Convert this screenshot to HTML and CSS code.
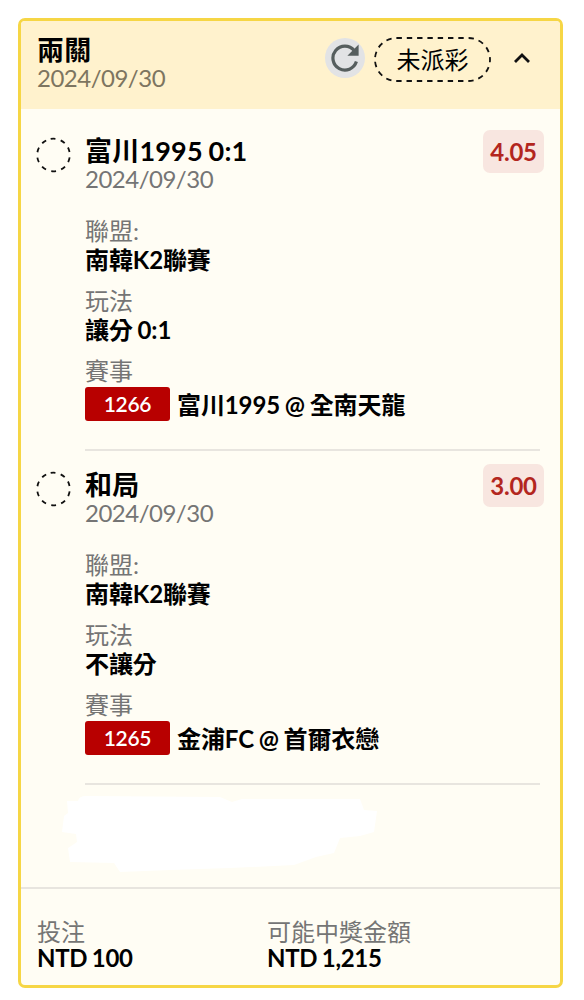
FILE: index.html
```html
<!DOCTYPE html>
<html lang="zh-Hant">
<head>
    <meta charset="UTF-8">
    <meta name="viewport" content="width=device-width, initial-scale=1.0">
    <title>兩關</title>
    <link rel="stylesheet" href="styles.css">
</head>
<body>
    <div class="ticket">
        <div class="ticket-header">
            <div class="heading">
                <div class="title">兩關</div>
                <div class="date">2024/09/30</div>
            </div>
            <button class="refresh">
                <svg width="30" height="30" viewBox="0 0 30 30">
                    <path d="M24.2 7.4 A12 12 0 1 0 26.4 18.6" fill="none" stroke="#565e5e" stroke-width="3.2"/>
                    <path d="M28.6 1.4 V12.8 H17.4 Z" fill="#565e5e"/>
                </svg>
            </button>
            <div class="status">
                <svg class="status-line" width="118" height="46" viewBox="0 0 118 46">
                    <rect x="2" y="1" width="115" height="43" rx="21.5" fill="none" stroke="#111" stroke-width="1.8" stroke-dasharray="5.4 4.9"/>
                </svg>
                <span>未派彩</span>
            </div>
            <svg class="arrow" width="18" height="12" viewBox="0 0 18 12">
                <path d="M2 10 L9 3 L16 10" fill="none" stroke="#111" stroke-width="2.8"/>
            </svg>
        </div>

        <div class="legs">
            <div class="leg">
                <svg class="pending" width="36" height="36" viewBox="0 0 36 36">
                    <circle cx="17.5" cy="18" r="16.3" transform="rotate(-100 17.5 18)" fill="none" stroke="#111" stroke-width="1.8" stroke-dasharray="4.8 5.44"/>
                </svg>
                <div class="leg-body">
                    <div class="title">富川1995 0:1</div>
                    <div class="date">2024/09/30</div>
                    <div class="fields">
                        <div class="field">
                            <div class="label">聯盟:</div>
                            <div class="value">南韓K2聯賽</div>
                        </div>
                        <div class="field">
                            <div class="label">玩法</div>
                            <div class="value">讓分 0:1</div>
                        </div>
                        <div class="field">
                            <div class="label">賽事</div>
                            <div class="match"><span class="code">1266</span><span class="value">富川1995 @ 全南天龍</span></div>
                        </div>
                    </div>
                </div>
                <div class="odds">4.05</div>
            </div>

            <div class="leg">
                <svg class="pending" width="36" height="36" viewBox="0 0 36 36">
                    <circle cx="17.5" cy="18" r="16.3" transform="rotate(-100 17.5 18)" fill="none" stroke="#111" stroke-width="1.8" stroke-dasharray="4.8 5.44"/>
                </svg>
                <div class="leg-body">
                    <div class="title">和局</div>
                    <div class="date">2024/09/30</div>
                    <div class="fields">
                        <div class="field">
                            <div class="label">聯盟:</div>
                            <div class="value">南韓K2聯賽</div>
                        </div>
                        <div class="field">
                            <div class="label">玩法</div>
                            <div class="value">不讓分</div>
                        </div>
                        <div class="field">
                            <div class="label">賽事</div>
                            <div class="match"><span class="code">1265</span><span class="value">金浦FC @ 首爾衣戀</span></div>
                        </div>
                    </div>
                </div>
                <div class="odds">3.00</div>
            </div>
        </div>

        <div class="note">
            <svg width="318" height="78" viewBox="0 0 318 78">
                <path d="M8 5 Q9 0 16 0 L150 1 L162 6 L172 3 L290 3 L294 14 L307 15 L304 36 L290 40 L270 42 L264 57 L246 61 L224 69 L160 72 L100 74 L50 76 L44 67 L0 66 L-2 52 L7 46 L6 38 L-8 36 L-6 20 L-2 17 L-3 5 Z" transform="translate(8 0)" fill="#fff"/>
            </svg>
        </div>

        <div class="ticket-footer">
            <div class="amount">
                <div class="label">投注</div>
                <div class="value">NTD 100</div>
            </div>
            <div class="amount">
                <div class="label">可能中獎金額</div>
                <div class="value">NTD 1,215</div>
            </div>
        </div>
    </div>
</body>
</html>
```
FILE: styles.css
```css
* { box-sizing: border-box; }
body {
    margin: 0;
    padding: 18px 21px 12px 18px;
    background-color: #fff;
    color: #000;
    font-family: Lato, "Noto Sans CJK TC", sans-serif;
    font-size: 24px;
}
.ticket {
    display: flex;
    flex-direction: column;
    height: 970px;
    border: 3px solid #f6d645;
    border-radius: 7px;
    background-color: #fffdf4;
    overflow: hidden;
}
.ticket-header {
    display: flex;
    align-items: flex-start;
    height: 88px;
    padding: 13px 29px 0 16px;
    background-color: #fff2cd;
}
.heading { flex: 1; }
.title {
    font-size: 27px;
    font-weight: 700;
    line-height: 32px;
    letter-spacing: 0.2px;
    word-spacing: -1px;
    white-space: nowrap;
}
.date { line-height: 26px; color: #757575; letter-spacing: -0.5px; }
.ticket-header .date { margin-top: -1px; color: #7d7560; }
.refresh {
    display: flex;
    align-items: center;
    justify-content: center;
    width: 40px;
    height: 40px;
    margin-top: 4px;
    padding: 0;
    border: none;
    border-radius: 50%;
    background-color: #e2e3e5;
}
.status {
    position: relative;
    width: 118px;
    height: 46px;
    margin: 3px 22px 0 8px;
    padding-left: 1px;
    text-align: center;
    line-height: 46px;
}
.status-line { position: absolute; left: 0; top: 0; }
.arrow { margin-top: 18px; }

.legs { padding: 8px 20px 0 15px; }
.leg {
    position: relative;
    display: flex;
    height: 334px;
}
.pending { margin: 20px 13px 0 0; }
.leg-body {
    flex: 1;
    padding-top: 18px;
    border-bottom: 2px solid #e8e5df;
}
.leg-body .date { margin-top: -1px; }
.fields { margin-top: 24px; }
.field { margin-bottom: 12px; }
.label { line-height: 29px; color: #757575; }
.value {
    font-weight: 700;
    line-height: 29px;
    letter-spacing: -0.1px;
    word-spacing: -1px;
    white-space: nowrap;
}
.match {
    display: flex;
    align-items: center;
    height: 37px;
}
.match .value { padding-top: 1px; }
.code {
    width: 85px;
    height: 34px;
    margin-right: 7px;
    border-radius: 3px;
    background-color: #b80000;
    color: #fff;
    font-size: 21px;
    font-weight: 600;
    line-height: 34px;
    letter-spacing: -0.3px;
    text-align: center;
}
.odds {
    position: absolute;
    right: -4px;
    top: 13px;
    width: 61px;
    height: 43px;
    border-radius: 7px;
    background-color: #f8e6e0;
    color: #b3261e;
    font-weight: 700;
    line-height: 44px;
    letter-spacing: -0.3px;
    text-align: center;
}

.note { flex: 1; padding: 11px 0 0 41px; }
.ticket-footer {
    display: flex;
    height: 98px;
    padding: 30px 16px 0;
    border-top: 2px solid #e8e5df;
}
.amount { width: 230px; }
.amount .label { line-height: 26px; }
.amount .value { line-height: 25px; letter-spacing: -0.3px; }
```
